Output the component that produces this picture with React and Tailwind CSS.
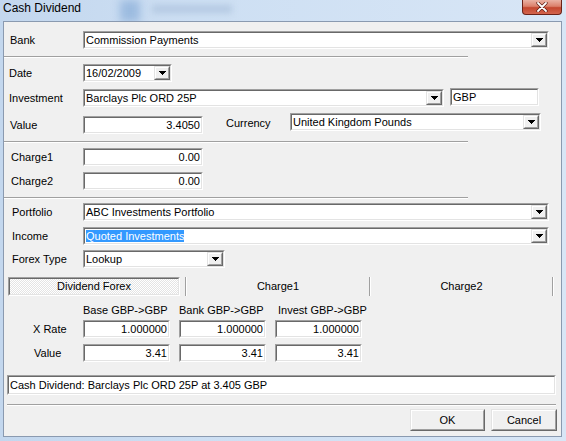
import React from "react";

function Arrow() {
  return (
    <svg width="7" height="4" viewBox="0 0 7 4" shapeRendering="crispEdges">
      <rect x="0" y="0" width="7" height="1" fill="#000" />
      <rect x="1" y="1" width="5" height="1" fill="#000" />
      <rect x="2" y="2" width="3" height="1" fill="#000" />
      <rect x="3" y="3" width="1" height="1" fill="#000" />
    </svg>
  );
}

function Sunken({ className = "", inner = "", children }) {
  return (
    <div className={`border border-t-[#a0a0a0] border-l-[#a0a0a0] border-b-white border-r-white ${className}`}>
      <div className={`h-full w-full border border-t-[#696969] border-l-[#696969] border-b-[#e3e3e3] border-r-[#e3e3e3] bg-white flex items-center ${inner}`}>
        {children}
      </div>
    </div>
  );
}

function Raised({ className = "", children }) {
  return (
    <div className={`border border-t-[#e3e3e3] border-l-[#e3e3e3] border-b-[#696969] border-r-[#696969] bg-[#f0f0f0] ${className}`}>
      <div className="h-full w-full border border-t-white border-l-white border-b-[#a0a0a0] border-r-[#a0a0a0] flex items-center justify-center">
        {children}
      </div>
    </div>
  );
}

function Combo({ className = "", text, selected }) {
  return (
    <Sunken className={`h-[18px] ${className}`}>
      <div className="flex-1 pl-[1px] leading-[13px] whitespace-nowrap overflow-hidden">
        {selected ? <span className="bg-[#3399ff] text-white">{text}</span> : text}
      </div>
      <Raised className="w-[16px] h-full shrink-0">
        <Arrow />
      </Raised>
    </Sunken>
  );
}

function Edit({ className = "", text, right }) {
  return (
    <Sunken className={`h-[18px] ${className}`} inner={right ? "justify-end pr-[1px]" : "pl-[1px]"}>
      <span className="leading-[13px] whitespace-nowrap">{text}</span>
    </Sunken>
  );
}

function HSep({ className = "" }) {
  return <div className={`h-[2px] border-t border-t-[#a0a0a0] border-b border-b-white ${className}`} />;
}

function VSep() {
  return <div className="w-[2px] h-full border-l border-l-[#a0a0a0] border-r border-r-white shrink-0" />;
}

function CloseBtn() {
  return (
    <div className="w-[40px] h-[15px] rounded-b-[4px] border border-t-0 border-[#6b2218] bg-[linear-gradient(180deg,#eab2a4_0%,#db806b_45%,#c4472f_55%,#d3654e_100%)] flex items-center justify-center">
      <svg width="12" height="10" viewBox="0 0 12 10">
        <path d="M2 1 L10 9 M10 1 L2 9" stroke="#5a1a12" strokeWidth="3.2" strokeLinecap="round" />
        <path d="M2 1 L10 9 M10 1 L2 9" stroke="#ffffff" strokeWidth="1.8" strokeLinecap="round" />
      </svg>
    </div>
  );
}

function Label({ className = "", children }) {
  return <div className={`w-[79px] shrink-0 leading-[13px] ${className}`}>{children}</div>;
}

export default function App() {
  return (
    <div className="w-[566px] h-[441px] overflow-hidden relative bg-[linear-gradient(90deg,#c3d7ee_0%,#cddff3_35%,#d8e6f6_100%)] text-black font-['Liberation_Sans',Arial,sans-serif]">
      <div className="absolute left-[120px] top-0 w-[20px] h-[22px] bg-[#9cbbe0] blur-[4px]" />
      <div className="absolute left-[152px] top-[5px] w-[80px] h-[8px] bg-[#b4c9e2] blur-[3px]" />
      <div className="relative flex flex-col h-full">
        <div className="h-[21px] flex items-start justify-between pl-[3px] pr-[4px]">
          <div className="text-[12px] leading-[15px] mt-[1px]">Cash Dividend</div>
          <CloseBtn />
        </div>
        <div className="ml-[3px] w-[559px] h-[416px] border border-[#8a9ab0] bg-[#f0f0f0] flex flex-col text-[11px]">
          {/* Bank */}
          <div className="mt-[9px] h-[18px] flex items-center">
            <Label className="pl-[6px]">Bank</Label>
            <Combo className="w-[466px]" text="Commission Payments" />
          </div>
          <HSep className="mt-[7px] w-[464px]" />
          {/* Date */}
          <div className="mt-[6px] h-[18px] flex items-center">
            <Label className="pl-[5px]">Date</Label>
            <Combo className="w-[89px]" text="16/02/2009" />
          </div>
          {/* Investment */}
          <div className="mt-[7px] h-[18px] flex items-center">
            <Label className="pl-[5px]">Investment</Label>
            <Combo className="w-[361px]" text="Barclays Plc ORD 25P" />
            <Edit className="w-[89px] ml-[6px] -mt-[2px]" text="GBP" />
          </div>
          {/* Value */}
          <div className="mt-[6px] h-[21px] flex items-start">
            <Label className="pl-[6px] mt-[6px]">Value</Label>
            <Edit className="w-[120px] mt-[3px]" text="3.4050" right />
            <div className="w-[64px] ml-[23px] leading-[13px] mt-[4px]">Currency</div>
            <Combo className="w-[251px]" text="United Kingdom Pounds" />
          </div>
          <HSep className="mt-[7px] w-[464px]" />
          {/* Charges */}
          <div className="mt-[5px] h-[18px] flex items-center">
            <Label className="pl-[7px]">Charge1</Label>
            <Edit className="w-[120px]" text="0.00" right />
          </div>
          <div className="mt-[6px] h-[18px] flex items-center">
            <Label className="pl-[7px]">Charge2</Label>
            <Edit className="w-[120px]" text="0.00" right />
          </div>
          <HSep className="mt-[7px] w-[464px]" />
          {/* Portfolio */}
          <div className="mt-[4px] h-[18px] flex items-center">
            <Label className="pl-[8px]">Portfolio</Label>
            <Combo className="w-[466px]" text="ABC Investments Portfolio" />
          </div>
          <div className="mt-[6px] h-[18px] flex items-center">
            <Label className="pl-[8px]">Income</Label>
            <Combo className="w-[466px]" text="Quoted Investments" selected />
          </div>
          <div className="mt-[5px] h-[18px] flex items-center">
            <Label className="pl-[8px]">Forex Type</Label>
            <Combo className="w-[142px]" text="Lookup" />
          </div>
          {/* Tabs */}
          <div className="mt-[9px] h-[19px] flex items-stretch">
            <div className="ml-[4px] w-[172px] border border-t-[#a0a0a0] border-l-[#a0a0a0] border-b-white border-r-white">
              <div className="h-full w-full border border-t-[#696969] border-l-[#696969] border-b-[#e3e3e3] border-r-[#e3e3e3] bg-[repeating-conic-gradient(#ffffff_0_25%,#e4e4e4_0_50%)] bg-[length:2px_2px] flex items-center justify-center leading-[13px]">
                Dividend Forex
              </div>
            </div>
            <div className="w-[5px] shrink-0" />
            <VSep />
            <div className="w-[182px] flex items-center justify-center leading-[13px]">Charge1</div>
            <VSep />
            <div className="w-[181px] flex items-center justify-center leading-[13px]">Charge2</div>
            <VSep />
          </div>
          {/* Forex grid */}
          <div className="mt-[7px] h-[14px] flex items-center leading-[13px]">
            <div className="ml-[79px] w-[96px]">Base GBP-&gt;GBP</div>
            <div className="w-[96px]">Bank GBP-&gt;GBP</div>
            <div className="pl-[3px]">Invest GBP-&gt;GBP</div>
          </div>
          <div className="mt-[3px] h-[18px] flex items-center">
            <Label className="pl-[29px]">X Rate</Label>
            <div className="flex gap-[9px]">
              <Edit className="w-[87px]" text="1.000000" right />
              <Edit className="w-[87px]" text="1.000000" right />
              <Edit className="w-[87px]" text="1.000000" right />
            </div>
          </div>
          <div className="mt-[6px] h-[18px] flex items-center">
            <Label className="pl-[30px]">Value</Label>
            <div className="flex gap-[9px]">
              <Edit className="w-[87px]" text="3.41" right />
              <Edit className="w-[87px]" text="3.41" right />
              <Edit className="w-[87px]" text="3.41" right />
            </div>
          </div>
          {/* Description */}
          <Edit className="mt-[13px] ml-[3px] w-[549px] !h-[20px]" text="Cash Dividend: Barclays Plc ORD 25P at 3.405 GBP" />
          <HSep className="mt-[9px] ml-[3px] w-[549px]" />
          {/* Buttons */}
          <div className="mt-[3px] ml-[406px] flex gap-[6px]">
            <Raised className="w-[75px] h-[22px]">
              <span className="leading-[13px]">OK</span>
            </Raised>
            <Raised className="w-[66px] h-[22px]">
              <span className="leading-[13px]">Cancel</span>
            </Raised>
          </div>
        </div>
      </div>
    </div>
  );
}
